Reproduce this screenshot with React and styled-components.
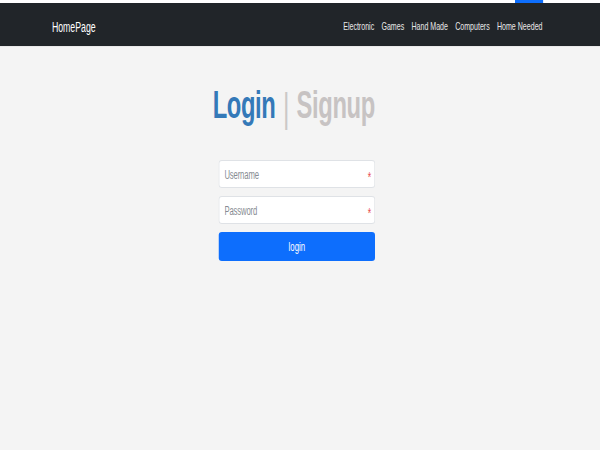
import React from "react";
import styled, { createGlobalStyle } from "styled-components";

// the page is laid out at 960px and squeezed to the 600px window,
// the way the reference screenshot was captured
const SQUEEZE = 0.625;

const GlobalStyle = createGlobalStyle`
  html, body {
    margin: 0;
    padding: 0;
    overflow: hidden;
    background: #f4f4f4;
  }
  * { box-sizing: border-box; }
`;

const Page = styled.div`
  width: ${600 / SQUEEZE}px;
  min-height: 100vh;
  transform: scaleX(${SQUEEZE});
  transform-origin: 0 0;
  background: #f4f4f4;
  font-family: "Liberation Sans", Arial, sans-serif;
`;

const TopStrip = styled.div`
  height: 3px;
  background: #ffffff;
  display: flex;
  justify-content: flex-end;
  padding-right: 91px;
`;

const StripButton = styled.span`
  width: 45px;
  height: 3px;
  background: #0d6efd;
`;

const Navbar = styled.nav`
  height: 44px;
  background: #212529;
  display: flex;
  align-items: center;
  justify-content: space-between;
  padding: 3px 92px 0 83px;
  border-bottom: 1px solid #e9e9e9;
`;

const Brand = styled.a`
  color: #ffffff;
  font-size: 14px;
  padding-top: 1px;
  text-decoration: none;
`;

const NavLinks = styled.div`
  display: flex;
  gap: 11.6px;
`;

const NavLink = styled.a`
  color: #e8e8e8;
  font-size: 11.3px;
  text-decoration: none;
`;

const Main = styled.main`
  display: flex;
  flex-direction: column;
  align-items: center;
  padding: 36px 10px 0 0;
`;

const Heading = styled.h1`
  margin: 0 10px 33px 0;
  height: 44px;
  font-size: 38px;
  line-height: 44px;
  font-weight: 700;
  letter-spacing: -0.6px;
  display: flex;
  align-items: flex-start;
  gap: 12px;
`;

const Tab = styled.span`
  color: ${(p) => (p.$active ? "#3479b8" : "#c7c3c3")};
`;

const Divider = styled.span`
  color: #cbc8c8;
  font-weight: 400;
  font-size: 40px;
  line-height: 44px;
  margin-top: 3px;
`;

const Form = styled.form`
  width: 250px;
  display: flex;
  flex-direction: column;
  gap: 8px;
`;

const Field = styled.div`
  position: relative;
`;

const Input = styled.input`
  width: 100%;
  height: 28px;
  border-style: solid;
  border-color: #dfe2e6;
  border-width: 1px 1.6px;
  border-radius: 5px / 3px;
  background: #ffffff;
  padding: 1px 16px 0 8px;
  font-family: inherit;
  font-size: 12.3px;
  letter-spacing: -0.2px;
  color: #212529;
  outline: none;

  &::placeholder {
    color: #878c92;
  }
`;

const Required = styled.span`
  position: absolute;
  right: 6px;
  top: 10px;
  color: #e84c4c;
  font-size: 14px;
  line-height: 1;
`;

const Button = styled.button`
  height: 29px;
  border: none;
  border-radius: 5px / 3px;
  background: #0d6efd;
  color: #ffffff;
  font-family: inherit;
  font-size: 12.5px;
  padding-top: 1px;
  cursor: pointer;
`;

const links = ["Electronic", "Games", "Hand Made", "Computers", "Home Needed"];

export default function App() {
  return (
    <>
      <GlobalStyle />
      <Page>
        <TopStrip>
          <StripButton />
        </TopStrip>
        <Navbar>
          <Brand href="#">HomePage</Brand>
          <NavLinks>
            {links.map((l) => (
              <NavLink href="#" key={l}>
                {l}
              </NavLink>
            ))}
          </NavLinks>
        </Navbar>
        <Main>
          <Heading>
            <Tab $active>Login</Tab>
            <Divider>|</Divider>
            <Tab>Signup</Tab>
          </Heading>
          <Form onSubmit={(e) => e.preventDefault()}>
            <Field>
              <Input placeholder="Username" />
              <Required>*</Required>
            </Field>
            <Field>
              <Input type="password" placeholder="Password" />
              <Required>*</Required>
            </Field>
            <Button type="submit">login</Button>
          </Form>
        </Main>
      </Page>
    </>
  );
}
